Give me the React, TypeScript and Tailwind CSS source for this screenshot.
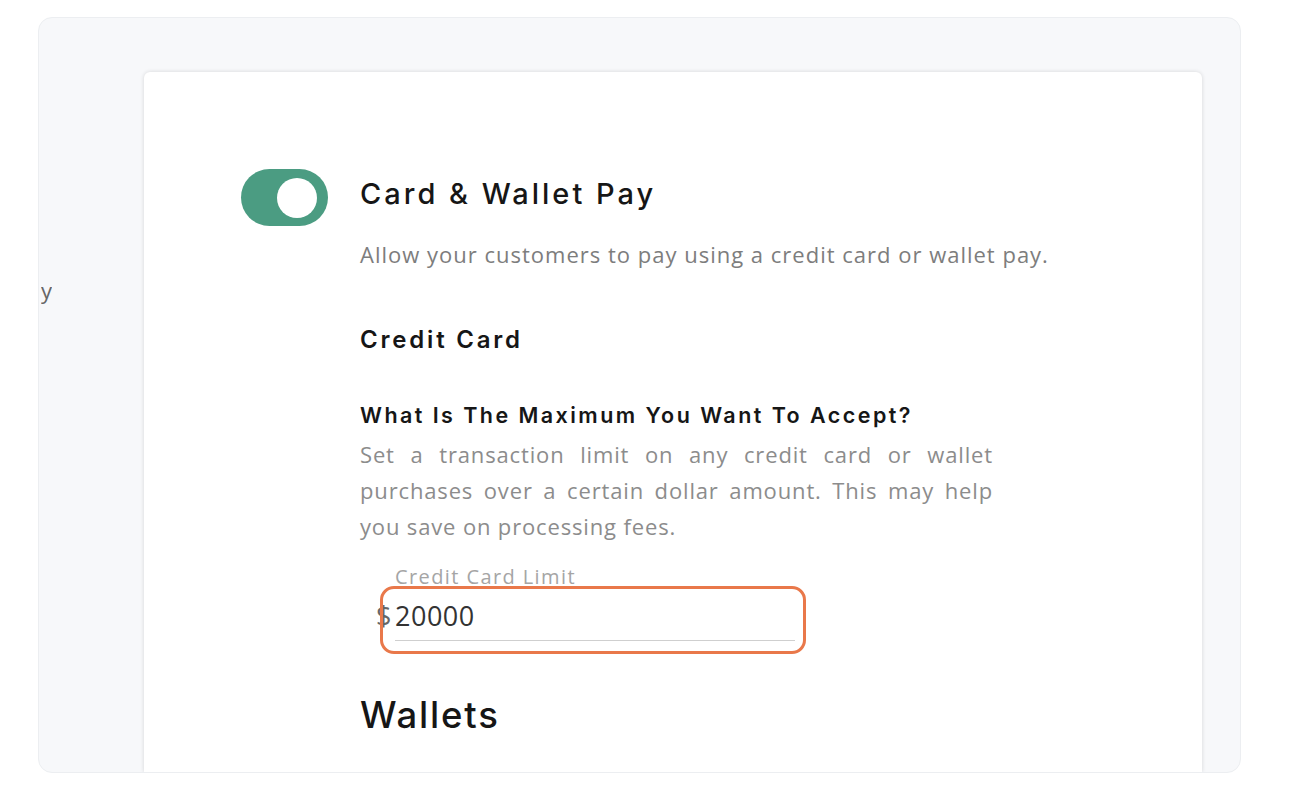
export default function App() {
  return (
    <div className="min-h-screen bg-white pt-[17px] pl-[38px]">
      <div className="flex h-[756px] w-[1203px] overflow-hidden rounded-[14px] border border-[#eceef1] bg-[#f7f8fa]">
        {/* sidebar label, cut off by the card */}
        <div className="w-[105px] shrink-0 pt-[257px] pl-[2px]">
          <div className="w-[11px] overflow-hidden">
            <div className="flex w-[11px] justify-end whitespace-nowrap font-['Open_Sans',sans-serif] text-[22px] leading-[30px] text-[#666]">
              Card &amp; Wallet Pay
            </div>
          </div>
        </div>

        {/* main card */}
        <div className="relative mt-[54px] w-[1058px] shrink-0 rounded-t-[6px] bg-white shadow-[0_0_4px_rgba(0,0,0,0.14)]">
          <div className="flex gap-[32px] pl-[97px] pt-[97px]">
            <div className="flex h-[57px] w-[87px] shrink-0 items-center justify-end rounded-full bg-[#4b9c82] pr-[11px]">
              <div className="h-[40px] w-[40px] rounded-full bg-white" />
            </div>

            <div className="flex flex-col">
              <h2 className="font-['Inter',sans-serif] text-[29px] font-medium leading-[50px] tracking-[3px] text-[#161616]">
                Card &amp; Wallet Pay
              </h2>
              <p className="mt-[20px] font-['Open_Sans',sans-serif] text-[22px] leading-[30px] tracking-[1px] text-[#7d7d7d]">
                Allow your customers to pay using a credit card or wallet pay.
              </p>

              <h3 className="mt-[56px] font-['Inter',sans-serif] text-[24px] font-semibold leading-[30px] tracking-[2.8px] text-[#161616]">
                Credit Card
              </h3>

              <h4 className="mt-[45px] font-['Inter',sans-serif] text-[21.5px] font-semibold leading-[30px] tracking-[2.45px] text-[#161616]">
                What Is The Maximum You Want To Accept?
              </h4>
              <p className="mt-[6px] w-[633px] text-justify font-['Open_Sans',sans-serif] text-[22px] leading-[36px] tracking-[0.85px] text-[#8c8c8c]">
                Set a transaction limit on any credit card or wallet purchases over a certain dollar amount. This may help you
                save on processing fees.
              </p>

              <div className="ml-[16px] mt-[21px] flex flex-col font-['Open_Sans',sans-serif]">
                <span className="ml-[19px] text-[20px] leading-[24px] tracking-[1.4px] text-[#a5a5a5]">Credit Card Limit</span>
                <div className="mt-[10px] flex">
                  <span className="w-[19px] text-[27px] leading-[34px] text-[#666]">$</span>
                  <div className="w-[400px] border-b border-[#cfcfcf] pb-[7px] text-[27px] leading-[34px] tracking-[0.5px] text-[#333]">
                    20000
                  </div>
                </div>
              </div>

              <h3 className="mt-[52px] font-['Inter',sans-serif] text-[36.5px] font-medium leading-[44px] tracking-[1.8px] text-[#161616]">
                Wallets
              </h3>
            </div>
          </div>

          {/* highlight annotation */}
          <div className="absolute left-[236px] top-[514px] h-[68px] w-[426px] rounded-[14px] border-[3px] border-[#e9784a]" />
        </div>
      </div>
    </div>
  )
}
